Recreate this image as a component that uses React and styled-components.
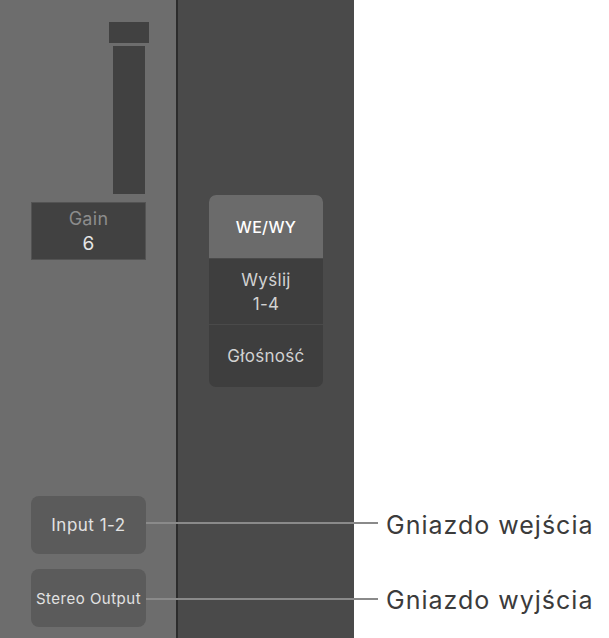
import React from "react";
import styled, { createGlobalStyle } from "styled-components";

const GlobalStyle = createGlobalStyle`
  html, body {
    margin: 0;
    padding: 0;
    background: #ffffff;
  }
  body {
    font-family: Inter, "Noto Sans", sans-serif;
  }
`;

const Page = styled.div`
  display: flex;
  width: 609px;
  height: 638px;
  overflow: hidden;
`;

const Strip = styled.div`
  width: 176px;
  flex-shrink: 0;
  background: #6d6d6d;
  display: flex;
  flex-direction: column;
  padding: 22px 0 11px 31px;
  box-sizing: border-box;
`;

const Divider = styled.div`
  width: 2px;
  flex-shrink: 0;
  background: #2c2c2c;
`;

const Inspector = styled.div`
  width: 176px;
  flex-shrink: 0;
  background: #4a4a4a;
  display: flex;
  flex-direction: column;
  padding: 195px 0 0 31px;
  box-sizing: border-box;
`;

const Fader = styled.div`
  align-self: flex-end;
  margin-right: 27px;
  display: flex;
  flex-direction: column;
  align-items: center;
  gap: 3px;
`;

const FaderCap = styled.div`
  width: 40px;
  height: 21px;
  background: #414141;
`;

const FaderTrack = styled.div`
  width: 32px;
  height: 148px;
  background: #414141;
`;

const GainBox = styled.div`
  margin-top: 8px;
  width: 115px;
  height: 58px;
  box-sizing: border-box;
  background: #414141;
  border: 1px solid #535353;
  display: flex;
  flex-direction: column;
  align-items: center;
  justify-content: center;
  line-height: 25px;
`;

const GainLabel = styled.span`
  font-size: 18px;
  letter-spacing: 0.3px;
  color: #8c8c8c;
`;

const GainValue = styled.span`
  font-size: 19px;
  color: #e6e6e6;
`;

const Spacer = styled.div`
  flex: 1;
`;

const Jacks = styled.div`
  display: flex;
  flex-direction: column;
  gap: 15px;
`;

const Jack = styled.div`
  position: relative;
  width: 115px;
  height: 58px;
  border-radius: 8px;
  background: #5b5b5b;
  color: #e2e2e2;
  font-size: ${(p) => p.$size}px;
  letter-spacing: 0.5px;
  display: flex;
  align-items: center;
  justify-content: center;
  white-space: nowrap;

  /* leader line running out to the callout label */
  &::after {
    content: "";
    position: absolute;
    left: 100%;
    top: ${(p) => p.$lineTop}px;
    width: 232px;
    height: 2px;
    background: #8a8a8a;
    z-index: 2;
  }
`;

const Tabs = styled.div`
  width: 114px;
  border-radius: 7px;
  overflow: hidden;
  background: #3e3e3e;
  display: flex;
  flex-direction: column;
`;

const Tab = styled.div`
  height: ${(p) => p.$h}px;
  display: flex;
  align-items: center;
  justify-content: center;
  text-align: center;
  font-size: ${(p) => (p.$active ? 16 : 17)}px;
  line-height: 24px;
  letter-spacing: 0.3px;
  font-weight: ${(p) => (p.$active ? 500 : 400)};
  color: ${(p) => (p.$active ? "#ffffff" : "#d2d2d2")};
  background: ${(p) => (p.$active ? "#6b6b6b" : "transparent")};
  border-top: ${(p) => (p.$divided ? "1px solid #4a4a4a" : "none")};
`;

const Callouts = styled.div`
  flex: 1;
  display: flex;
  flex-direction: column;
  justify-content: flex-end;
  padding: 0 0 23px 32px;
  gap: 45px;
`;

const Callout = styled.div`
  font-size: 25px;
  line-height: 30px;
  letter-spacing: 1px;
  color: #3b3b3b;
  white-space: nowrap;
`;

export default function App() {
  return (
    <>
      <GlobalStyle />
      <Page>
        <Strip>
          <Fader>
            <FaderCap />
            <FaderTrack />
          </Fader>
          <GainBox>
            <GainLabel>Gain</GainLabel>
            <GainValue>6</GainValue>
          </GainBox>
          <Spacer />
          <Jacks>
            <Jack $size={17} $lineTop={26}>Input 1-2</Jack>
            <Jack $size={15} $lineTop={29}>Stereo Output</Jack>
          </Jacks>
        </Strip>
        <Divider />
        <Inspector>
          <Tabs>
            <Tab $h={63} $active>WE/WY</Tab>
            <Tab $h={65} $divided>
              Wyślij
              <br />
              1-4
            </Tab>
            <Tab $h={62} $divided>Głośność</Tab>
          </Tabs>
        </Inspector>
        <Callouts>
          <Callout>Gniazdo wejścia</Callout>
          <Callout>Gniazdo wyjścia</Callout>
        </Callouts>
      </Page>
    </>
  );
}
